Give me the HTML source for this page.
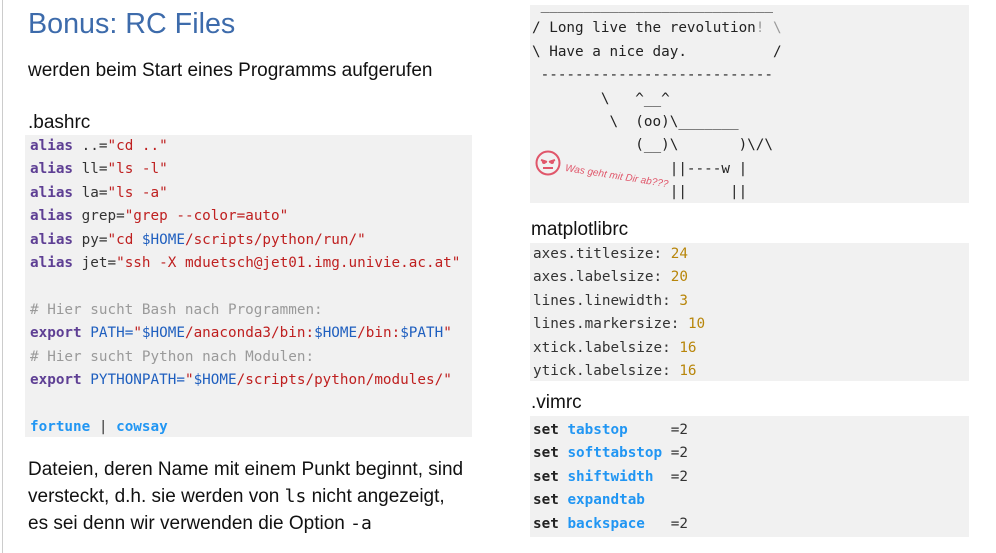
<!DOCTYPE html>
<html><head><meta charset="utf-8"><style>
*{margin:0;padding:0;box-sizing:border-box}
body{width:996px;height:553px;background:#fff;position:relative;overflow:hidden;font-family:"Liberation Sans",Arial,sans-serif;color:#111}
.a{position:absolute;white-space:pre}
.code{position:absolute;background:#f1f1f1;font-family:"DejaVu Sans Mono","Liberation Mono",monospace;font-size:14.3px;line-height:23.4px;white-space:pre;color:#333;overflow:hidden}
.k{color:#5e3f94;font-weight:bold}
.s{color:#bf2020}
.v{color:#1f5fbf}
.c{color:#9a9a9a}
.b{color:#2196f3;font-weight:bold}
.n{color:#b8860b}
.d{color:#222;font-weight:bold}
.t{font-size:19px;color:#111}
</style></head><body>
<div style="position:absolute;left:2px;top:0;width:1px;height:553px;background:#ccc"></div>
<div class="a" style="left:28px;top:8px;font-size:28.7px;color:#3d6bab">Bonus: RC Files</div>
<div class="a t" style="left:28px;top:60px">werden beim Start eines Programms aufgerufen</div>
<div class="a t" style="left:28px;top:112px">.bashrc</div>
<div class="code" style="left:25px;top:135px;width:447px;height:302px;padding:0 5px"><span class="k">alias</span> ..=<span class="s">"cd .."</span>
<span class="k">alias</span> ll=<span class="s">"ls -l"</span>
<span class="k">alias</span> la=<span class="s">"ls -a"</span>
<span class="k">alias</span> grep=<span class="s">"grep --color=auto"</span>
<span class="k">alias</span> py=<span class="s">"cd <span class="v">$HOME</span>/scripts/python/run/"</span>
<span class="k">alias</span> jet=<span class="s">"ssh -X mduetsch@jet01.img.univie.ac.at"</span>

<span class="c"># Hier sucht Bash nach Programmen:</span>
<span class="k">export</span> <span class="v">PATH=</span><span class="s">"<span class="v">$HOME</span>/anaconda3/bin:<span class="v">$HOME</span>/bin:<span class="v">$PATH</span>"</span>
<span class="c"># Hier sucht Python nach Modulen:</span>
<span class="k">export</span> <span class="v">PYTHONPATH=</span><span class="s">"<span class="v">$HOME</span>/scripts/python/modules/"</span>

<span class="b">fortune</span> | <span class="b">cowsay</span></div>
<div class="a t" style="left:28px;top:456px;line-height:27px">Dateien, deren Name mit einem Punkt beginnt, sind
versteckt, d.h. sie werden von <span style="font-family:'DejaVu Sans Mono',monospace;font-size:18px">ls</span> nicht angezeigt,
es sei denn wir verwenden die Option <span style="font-family:'DejaVu Sans Mono',monospace;font-size:18px">-a</span></div>

<div class="code" style="left:530px;top:5px;width:439px;height:198px;padding:0 2px;color:#222"><div style="margin-top:-11px"> ___________________________
/ Long live the revolution<span class="c">! \</span>
\ Have a nice day.          /
 ---------------------------
        \   ^__^
         \  (oo)\_______
            (__)\       )\/\
                ||----w |
                ||     ||</div></div>
<svg style="position:absolute;left:535px;top:150px" width="30" height="30" viewBox="0 0 30 30"><circle cx="13" cy="13" r="11.5" fill="none" stroke="#e0566a" stroke-width="2"/><path d="M6 10l6 2M20 10l-6 2" stroke="#e0566a" stroke-width="2"/><circle cx="9" cy="12" r="2" fill="#e0566a"/><circle cx="17" cy="12" r="2" fill="#e0566a"/><path d="M8 18h10" stroke="#e0566a" stroke-width="2"/></svg>
<div class="a" style="left:566px;top:163px;font-size:10px;font-style:italic;color:#e0566a;transform:rotate(9deg);transform-origin:0 0">Was geht mit Dir ab???</div>

<div class="a t" style="left:531px;top:219px">matplotlibrc</div>
<div class="code" style="left:530px;top:243px;width:439px;height:138px;padding:0 3px">axes.titlesize: <span class="n">24</span>
axes.labelsize: <span class="n">20</span>
lines.linewidth: <span class="n">3</span>
lines.markersize: <span class="n">10</span>
xtick.labelsize: <span class="n">16</span>
ytick.labelsize: <span class="n">16</span></div>
<div class="a t" style="left:531px;top:392px">.vimrc</div>
<div class="code" style="left:530px;top:416px;width:439px;height:121px;padding:3px 3px 0"><span class="d">set</span> <span class="b">tabstop</span>     =2
<span class="d">set</span> <span class="b">softtabstop</span> =2
<span class="d">set</span> <span class="b">shiftwidth</span>  =2
<span class="d">set</span> <span class="b">expandtab</span>
<span class="d">set</span> <span class="b">backspace</span>   =2</div>
</body></html>
